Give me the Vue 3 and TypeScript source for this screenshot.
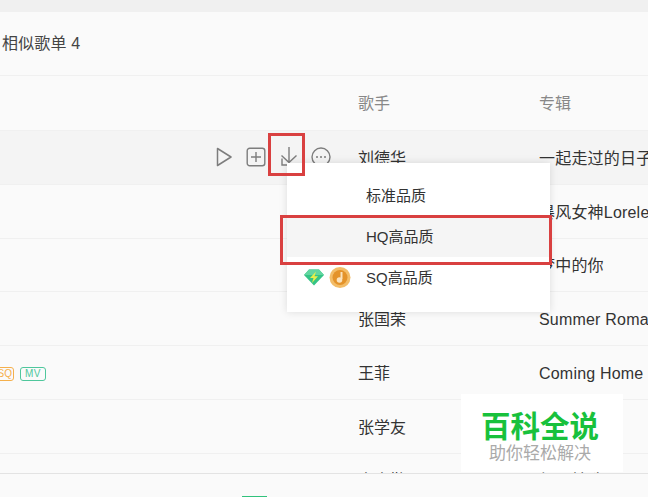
<script setup lang="ts">
interface Song { singer: string; album: string; active?: boolean; tags?: boolean }
const songs: Song[] = [
  { singer: '刘德华', album: '一起走过的日子', active: true },
  { singer: '周杰伦', album: '暴风女神Lorelei' },
  { singer: '陈奕迅', album: '梦中的你' },
  { singer: '张国荣', album: 'Summer Romance' },
  { singer: '王菲', album: 'Coming Home', tags: true },
  { singer: '张学友', album: '' },
  { singer: '李克勤', album: '红日精选' },
]
const qualities = [
  { label: '标准品质', badges: false, hot: false },
  { label: 'HQ高品质', badges: false, hot: true },
  { label: 'SQ高品质', badges: true, hot: false },
]
</script>

<template>
  <div class="page">
    <div class="strip"></div>
    <div class="title">相似歌单 4</div>
    <div class="row head">
      <div class="c-name"></div>
      <div class="c-singer">歌手</div>
      <div class="c-album">专辑</div>
    </div>
    <div class="list">
      <div v-for="s in songs" :key="s.singer" class="row song" :class="{ active: s.active }">
        <div class="c-name">
          <div v-if="s.active" class="actions">
            <svg class="play" width="18" height="20" viewBox="0 0 18 20" fill="none" stroke="#7d7d7d" stroke-width="1.5"><path d="M2.500 1.500 16 10 2.500 18.500Z" stroke-linejoin="round" /></svg>
            <svg class="add" width="20" height="20" viewBox="0 0 20 20" fill="none" stroke="#7d7d7d" stroke-width="1.4"><rect x="1.200" y="1.200" width="17.600" height="17.600" rx="2.500" /><path d="M10 5v10M5 10h10" /></svg>
            <svg width="20" height="20" viewBox="0 0 20 20" fill="none" stroke="#7d7d7d" stroke-width="1.4"><path d="M10 0v15M2.500 8.500 10 15.500l7.500-7" /><path d="M3 11.500v6.500h5" /></svg>
            <svg width="20" height="20" viewBox="0 0 20 20" fill="none" stroke="#7d7d7d" stroke-width="1.4"><circle cx="10" cy="10" r="9" /><circle cx="6" cy="10" r="1" fill="#7d7d7d" stroke="none" /><circle cx="10" cy="10" r="1" fill="#7d7d7d" stroke="none" /><circle cx="14" cy="10" r="1" fill="#7d7d7d" stroke="none" /></svg>
          </div>
          <div v-if="s.tags" class="tags">
            <span class="tag sq">SQ</span>
            <span class="tag mv">MV</span>
          </div>
        </div>
        <div class="c-singer">{{ s.singer }}</div>
        <div class="c-album">{{ s.album }}</div>
      </div>
    </div>
    <div class="footer"><span class="progress"></span></div>

    <div class="download-mark"></div>
    <div class="menu">
      <div v-for="q in qualities" :key="q.label" class="option" :class="{ hot: q.hot }">
        <span v-if="q.badges" class="badges">
          <svg width="20" height="17" viewBox="0 0 20 17"><path d="M5 .5h10L20 6 10 16.500 0 6Z" fill="#35c486" /><path d="M5 .5h10L20 6H0Z" fill="#62d6a0" /><path d="M12 2.500 6 9h3.500L8 14l6-6.800h-3.500Z" fill="#e6ee4a" /></svg>
          <svg width="22" height="21" viewBox="0 0 22 21"><circle cx="11" cy="10.500" r="10.500" fill="#f3bd68" /><circle cx="11" cy="10.500" r="7.500" fill="#e4932a" /><path d="M12.500 5v7" stroke="#fbe3bd" stroke-width="2" /><circle cx="10.500" cy="13" r="2.800" fill="#fbe3bd" /></svg>
        </span>
        {{ q.label }}
      </div>
      <div class="hot-mark"></div>
    </div>

    <div class="watermark">
      <div class="wm-main">百科全说</div>
      <div class="wm-sub">助你轻松解决</div>
    </div>
  </div>
</template>

<style scoped>
.page {
  position: relative;
  width: 648px;
  height: 497px;
  overflow: hidden;
  display: flex;
  flex-direction: column;
  background: #fafafa;
  color: #333;
  font-family: "Liberation Sans", "Noto Sans CJK SC", sans-serif;
  font-size: 16px;
}
.strip { height: 12px; flex: none; background: #f0f0f0; }
.title {
  height: 63px;
  flex: none;
  padding-left: 2px;
  line-height: 63px;
  color: #444;
  letter-spacing: .15px;
  border-bottom: 1px solid #f0f0f0;
}
.row { display: flex; align-items: center; flex: none; }
.c-name { width: 358px; flex: none; display: flex; justify-content: flex-end; align-items: center; }
.c-singer { width: 181px; flex: none; line-height: 22px; padding-top: 3px; }
.c-album { white-space: nowrap; letter-spacing: .2px; line-height: 22px; padding-top: 3px; }
.head { height: 54px; box-sizing: border-box; padding-bottom: 1px; color: #888; }
.head .c-album { letter-spacing: 0; }
.list { flex: 1; min-height: 0; overflow: hidden; }
.song { height: 53.750px; box-sizing: border-box; border-top: 1px solid #f0f0f0; }
.active { background: #f4f4f4; }
.actions { display: flex; align-items: center; gap: 12px; margin-right: 27px; }
.play, .add { margin-right: 1px; }
.tags { display: flex; gap: 6px; margin-right: 312px; margin-top: 3px; }
.tag {
  display: block;
  box-sizing: border-box;
  width: 27px;
  height: 14px;
  line-height: 11px;
  border: 1.500px solid;
  border-radius: 3px;
  font-size: 10px;
  letter-spacing: 0.5px;
  text-align: center;
}
.sq { color: #f5b04c; margin-left: -40px; text-align: right; padding-right: 1px; letter-spacing: 0; }
.mv { color: #4fc79c; width: 26px; }
.footer {
  position: relative;
  height: 23px;
  flex: none;
  background: #fafafa;
  border-top: 1px solid #e3e3e3;
}
.progress { position: absolute; left: 242px; bottom: 0; width: 25px; height: 1px; background: #31c27c; }
.download-mark {
  position: absolute;
  left: 268px;
  top: 133px;
  width: 37px;
  height: 43px;
  box-sizing: border-box;
  border: 3px solid #d94040;
  z-index: 3;
}
.menu {
  position: absolute;
  left: 287px;
  top: 163px;
  width: 263px;
  height: 149px;
  padding-top: 12px;
  box-sizing: border-box;
  background: #fff;
  box-shadow: 0 0 8px rgba(0, 0, 0, .12);
  z-index: 2;
  font-size: 15px;
}
.option {
  position: relative;
  height: 41px;
  line-height: 41px;
  padding-left: 79px;
  color: #333;
}
.hot { background: #f5f5f5; }
.badges { position: absolute; left: 17px; top: 10px; display: flex; align-items: center; gap: 5px; }
.hot-mark {
  position: absolute;
  left: -7px;
  top: 52px;
  width: 272px;
  height: 50px;
  box-sizing: border-box;
  border: 3px solid #d94040;
}
.watermark {
  position: absolute;
  left: 461px;
  top: 394px;
  width: 158px;
  padding-right: 4px;
  height: 78px;
  background: #fff;
  z-index: 4;
  text-align: center;
}
.wm-main { padding-top: 18px; font-size: 29.500px; line-height: 30px; font-weight: 700; color: #18c13c; }
.wm-sub { font-size: 17px; line-height: 24px; color: #aaa; }
</style>
